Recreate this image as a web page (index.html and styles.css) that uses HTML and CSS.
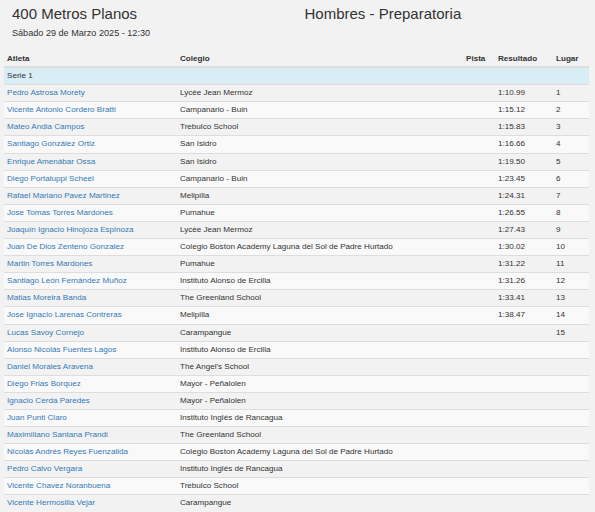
FILE: index.html
```html
<!DOCTYPE html>
<html lang="es">
<head>
<meta charset="utf-8">
<title>400 Metros Planos</title>
<link rel="stylesheet" href="styles.css">
</head>
<body>
<div class="page">
  <div class="head">
    <div class="half">
      <h1 class="title">400 Metros Planos</h1>
      <div class="sub">Sábado 29 de Marzo 2025 - 12:30</div>
    </div>
    <div class="half">
      <h1 class="title">Hombres - Preparatoria</h1>
    </div>
  </div>
  <table class="results">
    <colgroup>
      <col class="c-atleta"><col class="c-colegio"><col class="c-pista"><col class="c-res"><col class="c-lugar">
    </colgroup>
    <thead>
      <tr><th>Atleta</th><th>Colegio</th><th>Pista</th><th>Resultado</th><th>Lugar</th></tr>
    </thead>
    <tbody>
      <tr class="serie"><td colspan="5">Serie 1</td></tr>
      <tr><td><a href="#">Pedro Astrosa Morety</a></td><td>Lycée Jean Mermoz</td><td></td><td>1:10.99</td><td>1</td></tr>
      <tr><td><a href="#">Vicente Antonio Cordero Bratti</a></td><td>Campanario - Buin</td><td></td><td>1:15.12</td><td>2</td></tr>
      <tr><td><a href="#">Mateo Andia Campos</a></td><td>Trebulco School</td><td></td><td>1:15.83</td><td>3</td></tr>
      <tr><td><a href="#">Santiago González Ortiz</a></td><td>San Isidro</td><td></td><td>1:16.66</td><td>4</td></tr>
      <tr><td><a href="#">Enrique Amenábar Ossa</a></td><td>San Isidro</td><td></td><td>1:19.50</td><td>5</td></tr>
      <tr><td><a href="#">Diego Portaluppi Scheel</a></td><td>Campanario - Buin</td><td></td><td>1:23.45</td><td>6</td></tr>
      <tr><td><a href="#">Rafael Mariano Pavez Martinez</a></td><td>Melipilla</td><td></td><td>1:24.31</td><td>7</td></tr>
      <tr><td><a href="#">Jose Tomas Torres Mardones</a></td><td>Pumahue</td><td></td><td>1:26.55</td><td>8</td></tr>
      <tr><td><a href="#">Joaquín Ignacio Hinojoza Espinoza</a></td><td>Lycée Jean Mermoz</td><td></td><td>1:27.43</td><td>9</td></tr>
      <tr><td><a href="#">Juan De Dios Zenteno Gonzalez</a></td><td>Colegio Boston Academy Laguna del Sol de Padre Hurtado</td><td></td><td>1:30.02</td><td>10</td></tr>
      <tr><td><a href="#">Martin Torres Mardones</a></td><td>Pumahue</td><td></td><td>1:31.22</td><td>11</td></tr>
      <tr><td><a href="#">Santiago León Fernández Muñoz</a></td><td>Instituto Alonso de Ercilla</td><td></td><td>1:31.26</td><td>12</td></tr>
      <tr><td><a href="#">Matias Moreira Banda</a></td><td>The Greenland School</td><td></td><td>1:33.41</td><td>13</td></tr>
      <tr><td><a href="#">Jose Ignacio Larenas Contreras</a></td><td>Melipilla</td><td></td><td>1:38.47</td><td>14</td></tr>
      <tr><td><a href="#">Lucas Savoy Cornejo</a></td><td>Carampangue</td><td></td><td></td><td>15</td></tr>
      <tr><td><a href="#">Alonso Nicolás Fuentes Lagos</a></td><td>Instituto Alonso de Ercilla</td><td></td><td></td><td></td></tr>
      <tr><td><a href="#">Daniel Morales Aravena</a></td><td>The Angel's School</td><td></td><td></td><td></td></tr>
      <tr><td><a href="#">Diego Frias Borquez</a></td><td>Mayor - Peñalolen</td><td></td><td></td><td></td></tr>
      <tr><td><a href="#">Ignacio Cerda Paredes</a></td><td>Mayor - Peñalolen</td><td></td><td></td><td></td></tr>
      <tr><td><a href="#">Juan Punti Claro</a></td><td>Instituto Inglés de Rancagua</td><td></td><td></td><td></td></tr>
      <tr><td><a href="#">Maximiliano Santana Prandi</a></td><td>The Greenland School</td><td></td><td></td><td></td></tr>
      <tr><td><a href="#">Nicolás Andrés Reyes Fuenzalida</a></td><td>Colegio Boston Academy Laguna del Sol de Padre Hurtado</td><td></td><td></td><td></td></tr>
      <tr><td><a href="#">Pedro Calvo Vergara</a></td><td>Instituto Inglés de Rancagua</td><td></td><td></td><td></td></tr>
      <tr><td><a href="#">Vicente Chavez Noranbuena</a></td><td>Trebulco School</td><td></td><td></td><td></td></tr>
      <tr><td><a href="#">Vicente Hermosilla Vejar</a></td><td>Carampangue</td><td></td><td></td><td></td></tr>
    </tbody>
  </table>
</div>
</body>
</html>
```
FILE: styles.css
```css
html, body {
  margin: 0;
  padding: 0;
  background: #f2f2f2;
}
body {
  font-family: "Liberation Sans", Arial, sans-serif;
  color: #333;
}
.page {
  padding: 0 6px 0 4px;
}
.head {
  display: flex;
  height: 51px;
}
.half {
  flex: 1 1 0;
  padding: 0 8px;
}
.title {
  margin: 4px 0 0;
  font-size: 15px;
  font-weight: normal;
  line-height: 20px;
  color: #333;
}
.sub {
  margin-top: 3px;
  font-size: 9.1px;
  line-height: 13px;
}
.results {
  width: 585px;
  table-layout: fixed;
  border-collapse: collapse;
  font-size: 8.1px;
}
.c-atleta { width: 173px; }
.c-colegio { width: 286px; }
.c-pista { width: 32px; }
.c-res { width: 58px; }
.c-lugar { width: 36px; }
th, td {
  text-align: left;
  padding: 2px 3px 3px;
  line-height: 11.1px;
  white-space: nowrap;
  overflow: hidden;
}
th {
  font-weight: bold;
  border-bottom: 2px solid #ddd;
  padding-bottom: 2px;
}
td {
  border-top: 1px solid #ddd;
}
tbody tr:nth-child(odd) td {
  background: #f9f9f9;
}
tbody tr.serie td {
  background: #d9edf7;
}
a {
  color: #337ab7;
  text-decoration: none;
}
```
